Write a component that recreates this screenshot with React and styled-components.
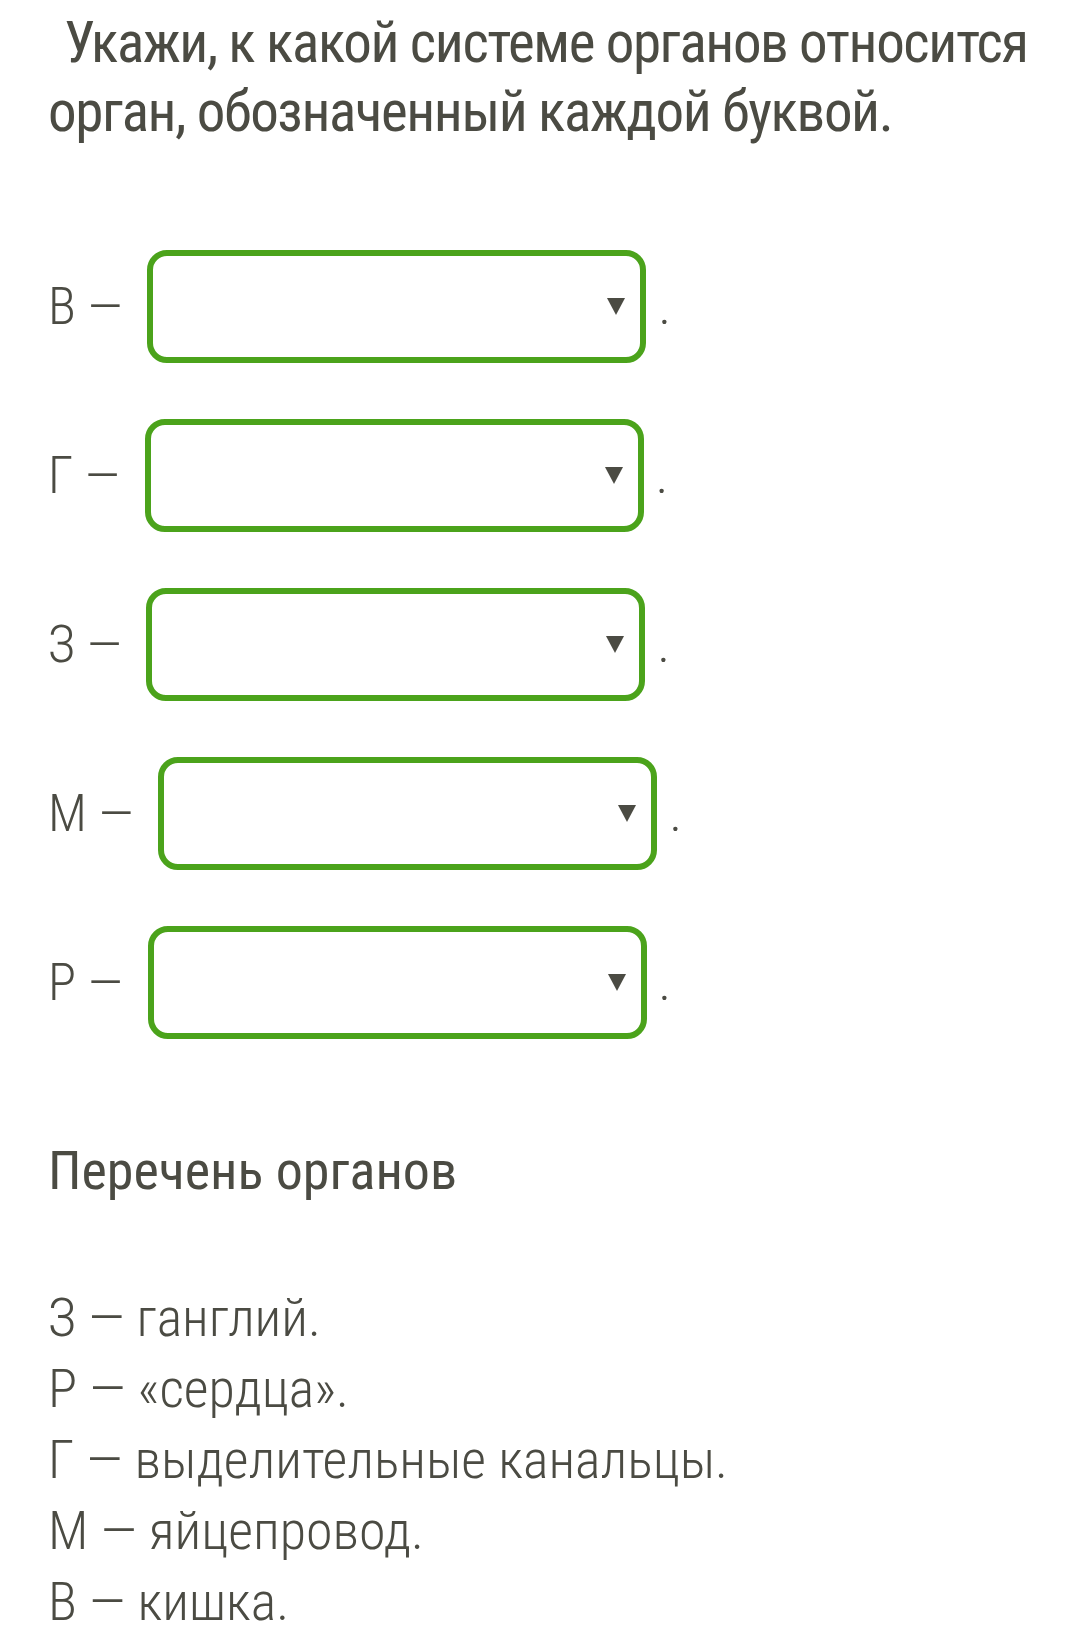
import styled, { createGlobalStyle } from "styled-components"

const GlobalStyle = createGlobalStyle`
    body{
        margin:0;
        background:#fff;
        font-family:"Roboto Condensed", Roboto, sans-serif;
        color:#4b4b43;
    }
`
const Page = styled.div`
    padding: 8px 20px 0 48px;
`
const Title = styled.h1`
    margin:0;
    font-size:57px;
    font-weight:400;
    letter-spacing:-1.4px;
    line-height:69px;
    text-indent:16px;
`
const Rows = styled.div`
    margin-top:104px;
    display:flex;
    flex-direction:column;
    gap:56px;
`
const Row = styled.div`
    display:flex;
    align-items:center;
    font-size:52px;
    font-weight:300;
`
const Label = styled.span`
    margin-right:25px;
`
const Select = styled.div`
    box-sizing:border-box;
    width:499px;
    height:113px;
    border:6px solid #4ba31b;
    border-radius:20px;
    display:flex;
    align-items:center;
    justify-content:flex-end;
    padding-right:15px;
`
const Arrow = styled.span`
    width:0;
    height:0;
    border-left:9.5px solid transparent;
    border-right:9.5px solid transparent;
    border-top:17px solid #4b4b43;
`
const Dot = styled.span`
    margin-left:12px;
`
const Heading = styled.h2`
    margin:97px 0 0;
    font-size:54px;
    font-weight:400;
    line-height:69px;
`
const List = styled.div`
    margin-top:77px;
    font-size:54px;
    font-weight:300;
    line-height:71px;
`

const rows = ["В —", "Г —", "З —", "М —", "Р —"]
const organs = ["З — ганглий.", "Р — «сердца».", "Г — выделительные канальцы.", "М — яйцепровод.", "В — кишка."]

export default function App(){
    return(
        <Page>
            <GlobalStyle />
            <Title>Укажи, к какой системе органов относится орган, обозначенный каждой буквой.</Title>
            <Rows>
                {rows.map(r => (
                    <Row key={r}>
                        <Label>{r}</Label>
                        <Select><Arrow /></Select>
                        <Dot>.</Dot>
                    </Row>
                ))}
            </Rows>
            <Heading>Перечень органов</Heading>
            <List>
                {organs.map(o => <div key={o}>{o}</div>)}
            </List>
        </Page>
    )
}
